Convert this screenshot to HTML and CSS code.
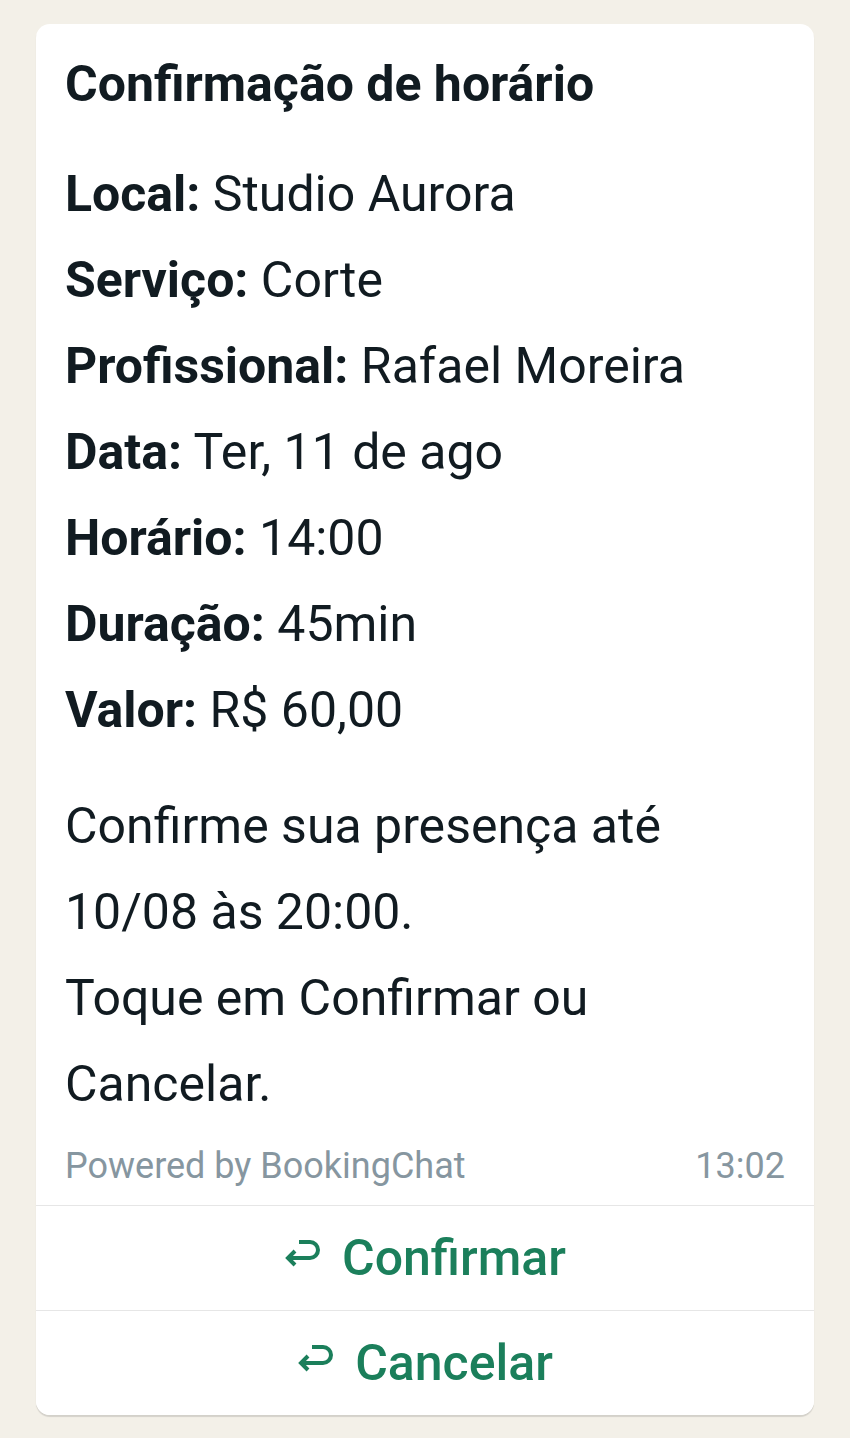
FILE: index.html
```html
<!DOCTYPE html>
<html lang="pt-BR">

<head>
    <meta charset="UTF-8">
    <meta name="viewport" content="width=device-width, initial-scale=1.0">
    <title>Confirmação de horário</title>
    <link rel="stylesheet" href="styles.css">
</head>

<body>
    <div class="card">
        <div class="cardBody">
            <div class="title">Confirmação de horário</div>
            <div class="details">
                <div><b>Local:</b> Studio Aurora</div>
                <div><b>Serviço:</b> Corte</div>
                <div><b>Profissional:</b> Rafael Moreira</div>
                <div><b>Data:</b> Ter, 11 de ago</div>
                <div><b>Horário:</b> 14:00</div>
                <div><b>Duração:</b> 45min</div>
                <div><b>Valor:</b> R$ 60,00</div>
            </div>
            <div class="note">
                Confirme sua presença até 10/08 às 20:00.<br />
                Toque em Confirmar ou Cancelar.
            </div>
            <div class="footer">
                <span>Powered by BookingChat</span>
                <span>13:02</span>
            </div>
        </div>
        <button class="reply">
            <svg class="replyIcon" viewBox="0 0 36 28" width="36" height="28">
                <path d="M4 18 H26 A8 8 0 0 0 26 2 H15 M11 11 L4 18 L11 25" />
            </svg>
            Confirmar
        </button>
        <button class="reply">
            <svg class="replyIcon" viewBox="0 0 36 28" width="36" height="28">
                <path d="M4 18 H26 A8 8 0 0 0 26 2 H15 M11 11 L4 18 L11 25" />
            </svg>
            Cancelar
        </button>
    </div>
</body>

</html>
```

FILE: styles.css
```css
body {
    margin: 0;
    padding: 24px 36px 22px;
    background: #f3f0e8;
    font-family: Roboto, "Noto Sans", sans-serif;
    color: #111b21;
}

.card {
    background: #fff;
    border-radius: 14px;
    box-shadow: 0 2px 1px rgba(0, 0, 0, 0.13);
    overflow: hidden;
}

.cardBody {
    padding: 17px 29px 19px;
    font-size: 50px;
    line-height: 86px;
}

.title {
    font-weight: 700;
    margin-bottom: 24px;
}

.details b {
    font-weight: 700;
}

.note {
    margin-top: 30px;
}

.footer {
    display: flex;
    justify-content: space-between;
    margin-top: 19px;
    font-size: 36px;
    line-height: 40px;
    color: #8696a0;
}

.reply {
    display: flex;
    justify-content: center;
    align-items: center;
    gap: 22px;
    width: 100%;
    height: 105px;
    padding: 0;
    border: none;
    border-top: 1px solid #e6e6e6;
    background: #fff;
    font-family: Roboto, "Noto Sans", sans-serif;
    font-size: 50px;
    font-weight: 500;
    color: #1b7f5b;
}

.replyIcon {
    width: 36px;
    height: 28px;
    margin-top: -8px;
}

.replyIcon path {
    fill: none;
    stroke: #1b7f5b;
    stroke-width: 4;
}
```
